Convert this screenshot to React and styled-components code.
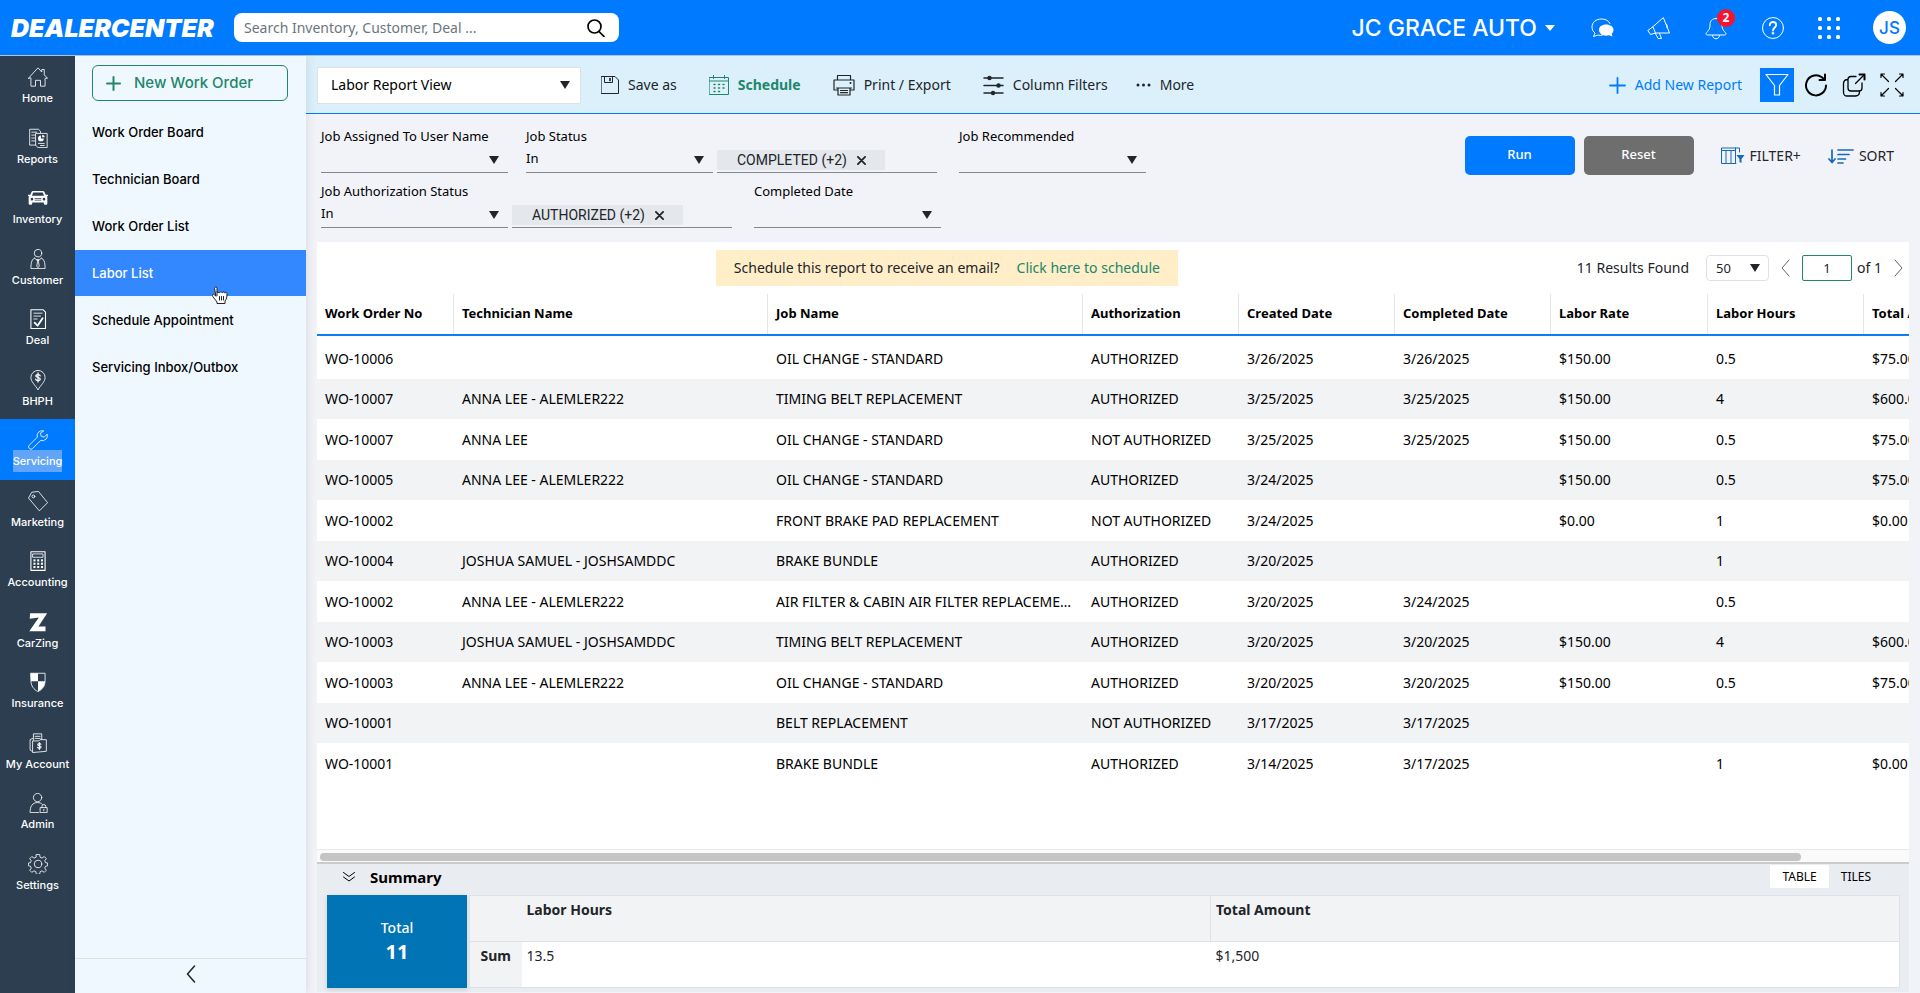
import React, { useState } from 'react';
import styled, { createGlobalStyle } from 'styled-components';

const GlobalStyle = createGlobalStyle`
	*, *::before, *::after {
		box-sizing: border-box;
	}

	body {
		margin: 0;
		background: #f2f3f8;
		color: #212529;
		font-family: 'Noto Sans', 'Open Sans', sans-serif;
		font-size: 14px;
		line-height: 20px;
	}

	button, input, select {
		font: inherit;
		color: inherit;
	}

	button {
		background: none;
		border: none;
		padding: 0;
		cursor: pointer;
	}

	a {
		color: inherit;
		text-decoration: none;
	}
`;

/* ---------- icons ---------- */

const Svg = styled.svg`
	display: block;
	flex: none;
	fill: none;
	stroke: currentColor;
	stroke-linecap: round;
	stroke-linejoin: round;
`;

function Icon({ size = 24, width, height, stroke = 1, box = '0 0 24 24', children }) {
	return (
		<Svg width={width || size} height={height || size} viewBox={box} strokeWidth={stroke} aria-hidden="true">
			{children}
		</Svg>
	);
}

const dot = { fill: 'currentColor', stroke: 'none' };

const navIcons = {
	Home: (
		<>
			<path d="M.500 13.500 12 1l4.500 5V3h3v6.500l4 4h-3V23h-5.500v-7h-6v7H3.500v-9.500z" />
		</>
	),
	Reports: (
		<>
			<path d="M9 20.500H2V1.500h10.500L15 4v2" />
			<path d="M4.500 5h6M4.500 8.500h4M4.500 12h4M4.500 15.500h4" />
			<path d="M9.500 6.500H23v17H12l-2.500-2.500z" />
			<path d="M12.500 18.500h7M15 21h4.500" />
			<path d="M15.500 9a3.500 3.500 0 1 0 3.500 3.500h-3.500z" {...dot} />
			<path d="M17 8a3.500 3.500 0 0 1 3.200 3.200H17z" {...dot} />
		</>
	),
	Inventory: (
		<path
			{...dot}
			fillRule="evenodd"
			d="M6 3.500h12c.8 0 1.500.5 1.800 1.200L21.200 8H24v2h-1.500c.5.600.7 1.200.7 2V19c0 .600-.4 1-1 1h-2.200c-.6 0-1-.4-1-1v-1.500H5V19c0 .600-.4 1-1 1H1.800c-.6 0-1-.4-1-1v-7c0-.8.2-1.400.7-2H0V8h2.800l1.400-3.300c.3-.7 1-1.200 1.800-1.200zM6.200 5.500 4.800 9.300h14.400l-1.400-3.800zM4.800 11.800a1.600 1.600 0 1 0 0 3.200 1.600 1.600 0 0 0 0-3.200zm14.400 0a1.600 1.600 0 1 0 0 3.200 1.600 1.600 0 0 0 0-3.200zM8 12.300v.9h8v-.9zm0 1.900v.9h8v-.9z"
		/>
	),
	Customer: (
		<>
			<circle cx="12" cy="5" r="4.500" />
			<path d="M8 11C5 12 3.500 15 3.500 23.500h17c0-8.500-1.500-11.500-4.500-12.500M8 11l4 3.500 4-3.500" />
			<path d="M11 12.500h2l-.5 2.500 1 5.500-1.500 2-1.500-2 1-5.500z" />
		</>
	),
	Deal: (
		<>
			<path d="M3.500.800h14.500l3 3v19.500H3.500z" strokeWidth="1.300" />
			<path d="M7 5h10M7 8.500h8M7 12h4" />
			<path d="m8 16.500 3.500 3.500 6-9" strokeWidth="2.200" />
		</>
	),
	BHPH: (
		<>
			<path d="M12 23.500C8 17.500 3.500 14 3.500 9a8.500 8.500 0 0 1 17 0c0 5-4.500 8.500-8.500 14.500z" />
			<path d="M14.700 7c-.3-1.100-1.300-1.600-2.700-1.600S9.400 6 9.400 7.200c0 2.400 5.300 1.200 5.300 3.700 0 1.200-1.100 1.800-2.700 1.800-1.500 0-2.500-.6-2.900-1.800M12 3.500v11" strokeWidth="1.500" />
		</>
	),
	Servicing: (
		<path d="M18.500 1a6 6 0 0 0-7.300 7.600L1.500 18.200a2.700 2.700 0 1 0 4 4L15.300 12.500A6 6 0 0 0 23 5l-3.500 3.500-3.600-.9-.9-3.400z" />
	),
	Marketing: (
		<>
			<path d="M.800 8 4.500 1.500l8-1L23.500 14 14 23.500z" />
			<circle cx="6.500" cy="6.500" r="1.700" />
		</>
	),
	Accounting: (
		<>
			<path d="M3.500.800h17v22.400h-17z" strokeWidth="1.300" />
			<path d="M6 3.500h12v4H6z" />
			{[10, 14, 18].map((y) =>
				[6.500, 11, 15.500].map((x) => <rect key={`${x}-${y}`} x={x} y={y} width="2.500" height="2.500" {...dot} />)
			)}
		</>
	),
	CarZing: <path d="M2.500 1.500h20.500L12.500 17.500H21V23H1.500L13 6.500 2 8z" {...dot} />,
	Insurance: (
		<>
			<path d="M3.500 1.500h17v9c0 6.500-3.500 10.500-8.500 13-5-2.500-8.500-6.500-8.500-13z" />
			<path d="M3.500 1.500H12V11H3.500zM12 11h8.500c-.3 6-4 10-8.500 12.500z" {...dot} />
		</>
	),
	'My Account': (
		<>
			<path d="M5 22 2.500 20.500V8l3-1.500M6.500 8.500V1h10v6.500M8.500 4h6M8.500 6.500h6" />
			<path d="M5.500 23V9.500H13L14.500 8H22v13.500z" />
			<path d="M15.500 13.600c-.3-.8-1-1-1.900-1s-1.900.5-1.900 1.400c0 1.800 4 1 4 2.900 0 1-.9 1.500-2.100 1.500-1 0-1.800-.4-2.100-1.300M13.600 11.500v8.200" strokeWidth="1.300" />
		</>
	),
	Admin: (
		<>
			<circle cx="11.500" cy="5.500" r="5" />
			<path d="M13 23.500H2.500c0-8 3-12 9-12 2.300 0 4.300.7 5.700 2" />
			<path d="M15 17.500h8v6h-8zM16.800 17.500V16a2.200 2.200 0 0 1 4.400 0v1.500M19 19.500v2" />
		</>
	),
	Settings: (
		<>
			<circle cx="12" cy="12" r="4.500" />
			<path d="M10 .700h4l.6 3.300 2.200.9 2.700-1.900 2.400 2.500-1.800 2.700.9 2.200 2.500.4v3.400l-2.500.5-.9 2.200 1.800 2.700-2.400 2.400-2.700-1.800-2.200.9-.6 3.200h-4l-.6-3.200-2.200-.9-2.700 1.800-2.400-2.400 1.800-2.700-.9-2.200-2.500-.5v-3.400l2.500-.4.9-2.200-1.800-2.700L4.500 3l2.700 1.900 2.200-.9z" />
		</>
	),
};

/* ---------- page ---------- */

const Page = styled.div`
	display: flex;
	flex-direction: column;
	min-height: 100vh;
`;

const Header = styled.header`
	display: flex;
	align-items: center;
	height: 56px;
	padding: 0 14px 0 11px;
	background: #007bff;
	border-bottom: 1px solid #b4c4d6;
	color: #fff;
`;

const Logo = styled.a`
	width: 223px;
	font-family: Inter, sans-serif;
	font-size: 25px;
	font-weight: 900;
	font-style: italic;
	white-space: nowrap;
`;

const SearchBox = styled.form`
	display: flex;
	align-items: center;
	width: 385px;
	height: 29px;
	padding: 0 14px 0 10px;
	border-radius: 8px;
	background: #fff;
	color: #000;
`;

const SearchInput = styled.input`
	flex: 1;
	min-width: 0;
	border: none;
	outline: none;
	background: transparent;
	padding: 0;

	&::placeholder {
		color: #6c757d;
		opacity: 1;
	}
`;

const HeaderTools = styled.div`
	display: flex;
	align-items: center;
	margin-left: auto;
`;

const Dealer = styled.button`
	display: flex;
	align-items: center;
	gap: 8px;
	margin-right: 35px;
	font-family: Inter, sans-serif;
	font-size: 23px;
	font-weight: 500;
	white-space: nowrap;
`;

const HeaderIcons = styled.div`
	display: flex;
	align-items: center;
	gap: 33px;
`;

const HeaderButton = styled.button`
	position: relative;
	display: block;
`;

const Badge = styled.span`
	position: absolute;
	top: -7px;
	right: -7px;
	width: 18px;
	height: 18px;
	border-radius: 50%;
	background: #f5132f;
	font-size: 12px;
	font-weight: 700;
	line-height: 18px;
	text-align: center;
`;

const Avatar = styled.button`
	width: 33px;
	height: 33px;
	border-radius: 50%;
	background: #fff;
	color: #007bff;
	font-family: Inter, sans-serif;
	font-size: 17px;
	font-weight: 500;
`;

const Body = styled.div`
	display: flex;
	flex: 1;
`;

const SideNav = styled.nav`
	flex: none;
	width: 75px;
	background: #2c3e50;
`;

const NavList = styled.div`
	display: grid;
	grid-auto-rows: 1fr;
	height: 847px;
`;

const NavItem = styled.a`
	display: flex;
	flex-direction: column;
	align-items: center;
	padding-top: 11px;
	background: ${(p) => (p.$active ? '#007bff' : 'transparent')};
	color: #fff;
	font-family: Inter, sans-serif;
	font-size: 11px;
	font-weight: 500;
	line-height: 22px;
	white-space: nowrap;
`;

const NavLabel = styled.span`
	background: ${(p) => (p.$selected ? '#62a5f8' : 'transparent')};
`;

const SubNav = styled.nav`
	position: relative;
	display: flex;
	flex-direction: column;
	flex: none;
	width: 231px;
	background: #f0f8ff;
	box-shadow: 2px 0 8px rgba(44, 62, 80, 0.1);
	font-family: Inter, sans-serif;
	font-weight: 500;
	font-size: 13px;
`;

const NewWorkOrder = styled.button`
	display: flex;
	align-items: center;
	gap: 13px;
	height: 36px;
	margin: 9px 18px 8px 17px;
	padding: 0 13px;
	border: 1px solid #20876b;
	border-radius: 6px;
	color: #20876b;
	font-size: 15px;
`;

const SubItem = styled.a`
	height: 46px;
	margin-bottom: 1px;
	padding-left: 17px;
	background: ${(p) => (p.$active ? '#3388ff' : 'transparent')};
	color: ${(p) => (p.$active ? '#fff' : '#000')};
	line-height: 46px;
`;

const Pointer = styled.div`
	position: absolute;
	top: 230px;
	left: 137px;
`;

const Collapse = styled.button`
	display: flex;
	justify-content: center;
	align-items: center;
	height: 35px;
	margin-top: auto;
	padding-bottom: 4px;
	border-top: 1px solid #dcdfe3;
`;

const Main = styled.main`
	display: flex;
	flex-direction: column;
	flex: 1;
	min-width: 0;
`;

const Toolbar = styled.div`
	display: flex;
	align-items: center;
	height: 58px;
	padding: 1px 16px 0 11px;
	background: #dcf0fb;
	border-bottom: 1px solid #007bff;
`;

const SelectWrap = styled.div`
	position: relative;
	display: block;
	width: ${(p) => p.$width}px;
`;

const Caret = styled.span`
	position: absolute;
	top: 50%;
	right: ${(p) => p.$right || 9}px;
	margin-top: -4px;
	border: 5px solid transparent;
	border-top: 8px solid #212529;
	border-bottom: 0;
	pointer-events: none;
`;

const DealerCaret = styled.span`
	border: 5px solid transparent;
	border-top: 6px solid #fff;
	border-bottom: 0;
`;

const ViewSelect = styled.select`
	display: block;
	width: 100%;
	height: 37px;
	padding: 0 13px;
	appearance: none;
	border: 1px solid #dee2e6;
	border-radius: 0;
	background: #fff;
	color: #000;
`;

const ToolButton = styled.button`
	display: flex;
	align-items: center;
	gap: 9px;
	margin-left: ${(p) => p.$space || 32}px;
	color: ${(p) => p.$color || '#212529'};
	font-weight: ${(p) => (p.$bold ? 700 : 400)};
	white-space: nowrap;
`;

const ToolRight = styled.div`
	display: flex;
	align-items: center;
	gap: 14px;
	margin-left: auto;
	color: #000;
`;

const FilterToggle = styled.button`
	display: flex;
	align-items: center;
	justify-content: center;
	width: 34px;
	height: 34px;
	margin-left: 4px;
	margin-right: -4px;
	background: #007bff;
	color: #fff;
`;

const FilterArea = styled.section`
	display: flex;
	justify-content: space-between;
	padding: 12px 26px 14px 15px;
	color: #000;
`;

const FilterRows = styled.div`
	display: flex;
	flex-direction: column;
	gap: 8px;
	font-size: 13px;
`;

const FilterRow = styled.div`
	display: flex;
	gap: 18px;
`;

const Field = styled.div`
	display: grid;
	grid-template-columns: 187px ${(p) => (p.$chip ? '220px' : '')};
	column-gap: 4px;
	padding-right: ${(p) => (p.$chip ? 4 : 0)}px;
`;

const FieldLabel = styled.label`
	grid-column: 1 / -1;
`;

const FieldSelect = styled.select`
	display: block;
	width: 100%;
	height: 27px;
	padding: 0 0 2px;
	appearance: none;
	border: none;
	border-bottom: 1px solid #85878a;
	border-radius: 0;
	background: transparent;
`;

const ChipField = styled.div`
	display: flex;
	align-items: flex-start;
	height: 27px;
	padding-top: 4px;
	border-bottom: 1px solid #85878a;
`;

const Chip = styled.span`
	display: flex;
	align-items: center;
	gap: 10px;
	height: 20px;
	padding: 0 19px 0 20px;
	background: #e4e7eb;
	color: #212529;
	font-family: Roboto, sans-serif;
	font-size: 14px;
`;

const Actions = styled.div`
	display: flex;
	align-items: center;
	gap: 9px;
	height: 39px;
	margin-top: 10px;
	color: #212529;
`;

const ActionButton = styled.button`
	width: 110px;
	height: 39px;
	padding-bottom: 3px;
	border-radius: 5px;
	background: ${(p) => (p.$primary ? '#007bff' : '#6e6e6e')};
	color: #fff;
	font-size: 13px;
	font-weight: 500;
`;

const LinkButton = styled.button`
	display: flex;
	align-items: center;
	gap: 5px;
	margin-left: 18px;
`;

const Report = styled.section`
	display: flex;
	flex-direction: column;
	flex: 1;
	margin: 0 11px 1px;
	background: #fff;
`;

const ReportTop = styled.div`
	display: flex;
	align-items: center;
	padding: 8px 6px 8px 0;
`;

const Notice = styled.p`
	margin: 0 auto;
	padding: 8px 18px;
	background: #ffeec8;
`;

const NoticeLink = styled.a`
	margin-left: 17px;
	color: #20876b;
`;

const Pager = styled.div`
	display: flex;
	align-items: center;
	color: #212529;
`;

const SizeSelect = styled.select`
	display: block;
	width: 100%;
	height: 26px;
	padding: 0 9px;
	appearance: none;
	border: 1px solid #dee2e6;
	border-radius: 4px;
	background: #fff;
	font-size: 13px;
`;

const PageInput = styled.input`
	width: 50px;
	height: 26px;
	margin-right: 5px;
	padding: 0;
	border: 1px solid #20876b;
	border-radius: 2px;
	text-align: center;
	font-size: 13px;
`;

const PageButton = styled.button`
	padding: 0 12px;

	&:last-child {
		padding-right: 0;
	}
`;

const Results = styled.span`
	margin-right: 17px;
`;

const TableWrap = styled.div`
	flex: 1;
	overflow: hidden;
`;

const Table = styled.table`
	width: 1741px;
	table-layout: fixed;
	border-collapse: separate;
	border-spacing: 0;
	color: #000;
`;

const Th = styled.th`
	height: 40px;
	padding: 0 7px 2px 8px;
	border-right: 1px solid #e4e6e9;
	text-align: left;
	font-size: 13px;
	font-weight: 700;
	white-space: nowrap;
`;

const HeadRule = styled.td`
	height: 4px;
	padding: 0;
	border-top: 2px solid #0a7ff5;
`;

const Tr = styled.tr`
	height: 40px;

	&:nth-child(odd) {
		height: 41px;
	}

	&:nth-child(even) {
		background: #f2f3f5;
	}
`;

const Td = styled.td`
	padding: 0 8px;
	overflow: hidden;
	text-overflow: ellipsis;
	white-space: nowrap;
`;

const ScrollTrack = styled.div`
	height: 15px;
	padding: 3px;
	border-top: 1px solid #e8e8e8;
	border-bottom: 2px solid #c9cbce;
	background: #fafafa;
`;

const ScrollThumb = styled.div`
	width: 93.4%;
	height: 8px;
	border-radius: 4px;
	background: #c4c4c4;
`;

const Summary = styled.section`
	padding: 2px 9px 4px 10px;
	background: #e9ecf0;
`;

const SummaryHead = styled.div`
	display: flex;
	align-items: center;
	height: 29px;
	padding: 0 17px 8px 16px;
	color: #000;
`;

const SummaryTitle = styled.h2`
	margin: 0 auto 0 15px;
	font-size: 15px;
	line-height: 20px;
`;

const Tab = styled.button`
	height: 23px;
	padding: 0 12px;
	background: ${(p) => (p.$active ? '#fff' : 'transparent')};
	font-size: 12px;
`;

const SummaryBody = styled.div`
	display: flex;
	gap: 2px;
`;

const TotalTile = styled.div`
	display: flex;
	flex-direction: column;
	align-items: center;
	justify-content: center;
	flex: none;
	width: 140px;
	background: #0074b5;
	color: #fff;
	font-weight: 500;
	box-shadow: 0 2px 5px rgba(0, 0, 0, 0.12);
`;

const TotalValue = styled.strong`
	font-size: 20px;
	line-height: 28px;
`;

const SumTable = styled.table`
	width: 100%;
	table-layout: fixed;
	border-collapse: collapse;
	border: 1px solid #dee2e6;
	background: #fff;
`;

const SumCell = styled.td`
	height: 46px;
	padding: 4px 5px;
	border-bottom: 1px solid #dee2e6;
	vertical-align: top;
`;

const SumHead = styled.th`
	height: 46px;
	padding: 4px 5px;
	border-bottom: 1px solid #dee2e6;
	border-right: ${(p) => (p.$divider ? '1px solid #dee2e6' : 'none')};
	background: #f2f3f5;
	text-align: ${(p) => (p.scope === 'row' ? 'center' : 'left')};
	vertical-align: top;
`;

const subItems = [
	'Work Order Board',
	'Technician Board',
	'Work Order List',
	'Labor List',
	'Schedule Appointment',
	'Servicing Inbox/Outbox',
];

const columns = [
	['Work Order No', 137],
	['Technician Name', 314],
	['Job Name', 315],
	['Authorization', 156],
	['Created Date', 156],
	['Completed Date', 156],
	['Labor Rate', 157],
	['Labor Hours', 156],
	['Total Amount', 194],
];

const rows = [
	['WO-10006', '', 'OIL CHANGE - STANDARD', 'AUTHORIZED', '3/26/2025', '3/26/2025', '$150.00', '0.5', '$75.00'],
	['WO-10007', 'ANNA LEE - ALEMLER222', 'TIMING BELT REPLACEMENT', 'AUTHORIZED', '3/25/2025', '3/25/2025', '$150.00', '4', '$600.00'],
	['WO-10007', 'ANNA LEE', 'OIL CHANGE - STANDARD', 'NOT AUTHORIZED', '3/25/2025', '3/25/2025', '$150.00', '0.5', '$75.00'],
	['WO-10005', 'ANNA LEE - ALEMLER222', 'OIL CHANGE - STANDARD', 'AUTHORIZED', '3/24/2025', '', '$150.00', '0.5', '$75.00'],
	['WO-10002', '', 'FRONT BRAKE PAD REPLACEMENT', 'NOT AUTHORIZED', '3/24/2025', '', '$0.00', '1', '$0.00'],
	['WO-10004', 'JOSHUA SAMUEL - JOSHSAMDDC', 'BRAKE BUNDLE', 'AUTHORIZED', '3/20/2025', '', '', '1', ''],
	['WO-10002', 'ANNA LEE - ALEMLER222', 'AIR FILTER & CABIN AIR FILTER REPLACEMENT', 'AUTHORIZED', '3/20/2025', '3/24/2025', '', '0.5', ''],
	['WO-10003', 'JOSHUA SAMUEL - JOSHSAMDDC', 'TIMING BELT REPLACEMENT', 'AUTHORIZED', '3/20/2025', '3/20/2025', '$150.00', '4', '$600.00'],
	['WO-10003', 'ANNA LEE - ALEMLER222', 'OIL CHANGE - STANDARD', 'AUTHORIZED', '3/20/2025', '3/20/2025', '$150.00', '0.5', '$75.00'],
	['WO-10001', '', 'BELT REPLACEMENT', 'NOT AUTHORIZED', '3/17/2025', '3/17/2025', '', '', ''],
	['WO-10001', '', 'BRAKE BUNDLE', 'AUTHORIZED', '3/14/2025', '3/17/2025', '', '1', '$0.00'],
];

function FilterField({ id, label, value = '', chip }) {
	return (
		<Field $chip={chip}>
			<FieldLabel htmlFor={id}>{label}</FieldLabel>
			<SelectWrap $width={187}>
				<FieldSelect id={id} defaultValue={value}>
					<option value={value}>{value}</option>
				</FieldSelect>
				<Caret />
			</SelectWrap>
			{chip && (
				<ChipField>
					<Chip>
						{chip}
						<button aria-label={`Remove ${chip}`}>
							<Icon size={9} stroke={2} box="0 0 10 10"><path d="m1 1 8 8M9 1 1 9" /></Icon>
						</button>
					</Chip>
				</ChipField>
			)}
		</Field>
	);
}

function TopBar() {
	return (
		<Header>
			<Logo href="#">DEALERCENTER</Logo>
			<SearchBox>
				<SearchInput aria-label="Search" placeholder="Search Inventory, Customer, Deal ..." />
				<button type="button" aria-label="Run search">
					<Icon size={18} stroke={1.700} box="0 0 18 18">
						<circle cx="7.500" cy="7.500" r="6.500" />
						<path d="m12 12.500 5 5" />
					</Icon>
				</button>
			</SearchBox>
			<HeaderTools>
				<Dealer>
					JC GRACE AUTO
					<DealerCaret />
				</Dealer>
				<HeaderIcons>
					<HeaderButton aria-label="Messages">
						<Icon>
							<path d="M20 7.500C18.500 4.500 15.500 3 11.500 3 6 3 2 6.300 2 11c0 2.500 1.200 4.700 3 6.100L3.500 20.500 8 19c1.500.5 3 .6 4 .4" />
							<path d="M16 8.500c4.500 0 7.500 2.300 7.500 5.300 0 1.600-.7 3-1.800 3.900l.8 2.800-3.400-1.200c-1 .3-2 .4-3.100.4-4.200 0-7-2.600-7-5.900 0-3 2.800-5.300 7-5.300z" {...dot} />
						</Icon>
					</HeaderButton>
					<HeaderButton aria-label="Announcements">
						<Icon>
							<path d="M16.500 2 22.500 17 8.500 17 3.500 18.500.800 14.500 5 11.500zM6 11l2.500 6M8.500 17.500 11 22.500h3.500L12.500 17.500M18.500 7.500c1.500.5 2 2 1.500 4" />
						</Icon>
					</HeaderButton>
					<HeaderButton aria-label="Notifications">
						<Icon>
							<path d="M12 2.500c-4 0-6 2.500-6 6.500 0 5-2 5.500-4 8.500 0 1 .5 1.500 1.500 1.500h17c1 0 1.500-.5 1.500-1.500C20 14.500 18 14 18 9c0-4-2-6.500-6-6.500zM8.500 19.500c.3 4.500 6.700 4.500 7 0" />
						</Icon>
						<Badge>2</Badge>
					</HeaderButton>
					<HeaderButton aria-label="Help">
						<Icon>
							<circle cx="12" cy="12" r="10.500" />
							<path d="M8.800 9.300c0-2 1.300-3.300 3.200-3.300s3.200 1.200 3.200 3c0 2.500-3.200 2.500-3.200 5.500" strokeWidth="1.800" />
							<circle cx="12" cy="17.300" r="1.300" {...dot} />
						</Icon>
					</HeaderButton>
					<HeaderButton aria-label="Apps">
						<Icon size={22} box="0 0 22 22">
							{[0, 9, 18].map((y) =>
								[0, 9, 18].map((x) => <rect key={`${x}-${y}`} x={x} y={y} width="4" height="4" rx="1.500" {...dot} />)
							)}
						</Icon>
					</HeaderButton>
					<Avatar>JS</Avatar>
				</HeaderIcons>
			</HeaderTools>
		</Header>
	);
}

function ReportToolbar() {
	return (
		<Toolbar>
			<SelectWrap $width={264}>
				<ViewSelect aria-label="Report view">
					<option>Labor Report View</option>
				</ViewSelect>
				<Caret $right={11} />
			</SelectWrap>
			<ToolButton $space={20}>
				<Icon size={18} box="0 0 18 18">
					<path d="M.5.500h13.500l3.500 3.500v13.500H.500zM3.500.500v6h8v-6" />
					<path d="M9 2.500v2" strokeWidth="1.700" />
				</Icon>
				Save as
			</ToolButton>
			<ToolButton $color="#20876b" $bold>
				<Icon size={20} box="0 0 20 20">
					<path d="M.5 2.500h19v17H.500zM.5 6h19M4.500.500v3M15.500.500v3" />
					<path d="M5 9.500h1M9.500 9.500h1M14 9.500h1M5 13h1M9.500 13h1M14 13h1M5 16.500h1M9.500 16.500h1" strokeWidth="1.500" />
				</Icon>
				Schedule
			</ToolButton>
			<ToolButton>
				<Icon size={22} box="0 0 22 22">
					<path d="M4.500 6V1.500h13V6M4.500 16H1V6h20v10h-3.500M5 14v7h12v-7M3.500 14h15M7.500 16.500h7M7.500 18.700h7" strokeWidth="1.200" />
					<circle cx="17.500" cy="9" r="1" {...dot} />
				</Icon>
				Print / Export
			</ToolButton>
			<ToolButton>
				<Icon size={21} stroke={1.500} box="0 0 21 21">
					<path d="M1 3h19M1 10.500h19M1 18h19" />
					<circle cx="6.500" cy="3" r="2.200" {...dot} />
					<circle cx="15.500" cy="10.500" r="2.200" {...dot} />
					<circle cx="10" cy="18" r="2.200" {...dot} />
				</Icon>
				Column Filters
			</ToolButton>
			<ToolButton $space={28}>
				<Icon width={15} height={4} box="0 0 15 4">
					<circle cx="2" cy="2" r="1.500" {...dot} />
					<circle cx="7.500" cy="2" r="1.500" {...dot} />
					<circle cx="13" cy="2" r="1.500" {...dot} />
				</Icon>
				More
			</ToolButton>
			<ToolRight>
				<ToolButton $color="#007bff">
					<Icon size={17} stroke={1.800} box="0 0 17 17"><path d="M8.500 1v15M1 8.500h15" /></Icon>
					Add New Report
				</ToolButton>
				<FilterToggle aria-label="Toggle filters">
					<Icon stroke={1.200}><path d="M1 1.500h22l-8.500 11V22h-5v-9.500z" /></Icon>
				</FilterToggle>
				<HeaderButton aria-label="Refresh">
					<Icon stroke={2}><path d="M22 12.500A10 10 0 1 1 17.500 4l2.500 2M21 1.500v5.500h-5.500" /></Icon>
				</HeaderButton>
				<HeaderButton aria-label="Open in new window">
					<Icon stroke={1.300}>
						<path d="M14 3.500H9a3 3 0 0 0-3 3v8.500a3 3 0 0 0 3 3h8a3 3 0 0 0 3-3v-5M6 6.500C3 6.500 1.500 8 1.500 10.500v9A3.500 3.500 0 0 0 5 23h8.500c2.500 0 4-1.500 4-4.500M13.500 10.500l9-9" />
						<path d="M17.500 1.500H22.500V6.500" strokeWidth="2" />
					</Icon>
				</HeaderButton>
				<HeaderButton aria-label="Full screen">
					<Icon stroke={1.200}>
						<path d="m1.500 1.500 7 7M1 4.500V1h3.500M22.500 1.500l-7 7M19.500 1H23v3.500M1.500 22.500l7-7M1 19.500V23h3.500M22.500 22.500l-7-7M19.500 23H23v-3.500" />
					</Icon>
				</HeaderButton>
			</ToolRight>
		</Toolbar>
	);
}

function Filters() {
	return (
		<FilterArea>
			<FilterRows>
				<FilterRow>
					<FilterField id="assigned" label="Job Assigned To User Name" />
					<FilterField id="status" label="Job Status" value="In" chip="COMPLETED (+2)" />
					<FilterField id="recommended" label="Job Recommended" />
				</FilterRow>
				<FilterRow>
					<FilterField id="authorization" label="Job Authorization Status" value="In" chip="AUTHORIZED (+2)" />
					<FilterField id="completed" label="Completed Date" />
				</FilterRow>
			</FilterRows>
			<Actions>
				<ActionButton $primary>Run</ActionButton>
				<ActionButton>Reset</ActionButton>
				<LinkButton>
					<Icon width={24} height={18} box="0 0 24 18">
						<g stroke="#1669b7">
							<path d="M15 16.500H.500V1h18v4M.5 3.500h14M5 3.500v13M10 3.500v13M14.500 1v15.500" />
							<path d="M15.500 8h8l-3 4v4l-2-1v-3z" fill="#1669b7" stroke="none" />
						</g>
					</Icon>
					FILTER+
				</LinkButton>
				<LinkButton>
					<Icon width={26} height={16} stroke={1.700} box="0 0 26 16">
						<path stroke="#1669b7" d="M4 2v12M1 11l3 3.500L7 11M10 2h15M10 6.500h11M10 11h7.500M10 15h5" />
					</Icon>
					SORT
				</LinkButton>
			</Actions>
		</FilterArea>
	);
}

function SummaryPanel() {
	const [tab, setTab] = useState('TABLE');
	return (
		<Summary>
			<SummaryHead>
				<button aria-label="Collapse summary">
					<Icon size={12} box="0 0 12 12"><path d="m.5 1.500 5.500 4 5.500-4M.5 6 6 10l5.500-4" /></Icon>
				</button>
				<SummaryTitle>Summary</SummaryTitle>
				{['TABLE', 'TILES'].map((name) => (
					<Tab key={name} $active={tab === name} onClick={() => setTab(name)}>{name}</Tab>
				))}
			</SummaryHead>
			<SummaryBody>
				<TotalTile>
					Total
					<TotalValue>11</TotalValue>
				</TotalTile>
				<SumTable>
					<colgroup>
						<col width="52" />
						<col />
						<col />
					</colgroup>
					<thead>
						<tr>
							<SumHead />
							<SumHead scope="col" $divider>Labor Hours</SumHead>
							<SumHead scope="col">Total Amount</SumHead>
						</tr>
					</thead>
					<tbody>
						<tr>
							<SumHead scope="row">Sum</SumHead>
							<SumCell>13.5</SumCell>
							<SumCell>$1,500</SumCell>
						</tr>
					</tbody>
				</SumTable>
			</SummaryBody>
		</Summary>
	);
}

function App() {
	return (
		<>
			<GlobalStyle />
			<Page>
				<TopBar />
				<Body>
					<SideNav>
						<NavList>
							{Object.keys(navIcons).map((name) => (
								<NavItem key={name} href="#" $active={name === 'Servicing'}>
									<Icon size={20}>{navIcons[name]}</Icon>
									<NavLabel $selected={name === 'Servicing'}>{name}</NavLabel>
								</NavItem>
							))}
						</NavList>
					</SideNav>
					<SubNav>
						<NewWorkOrder>
							<Icon size={15} stroke={2} box="0 0 15 15"><path d="M7.500 1v13M1 7.500h13" /></Icon>
							New Work Order
						</NewWorkOrder>
						{subItems.map((name) => (
							<SubItem key={name} href="#" $active={name === 'Labor List'}>{name}</SubItem>
						))}
						<Pointer>
							<Icon width={16} height={18} box="0 0 16 18">
								<path
									d="M5 9.500V2.300C5 .500 2.500.500 2.500 2.300l1.500 8-1.500-1.500C1 7.500-.3 9 .8 10.500L5 16v1.500h8V15c1.500-2 2-3.500 2-7.500 0-1.500-2-1.500-2-.3C13 5.500 10.500 5.500 10.500 7c0-1.500-2.700-1.500-2.700-.3L5 6"
									fill="#fff"
									stroke="#222"
								/>
								<path d="M7.500 10.500V14M9.500 10.500V14M11.500 10.500V14" stroke="#222" />
							</Icon>
						</Pointer>
						<Collapse aria-label="Collapse menu">
							<Icon width={10} height={18} stroke={1.500} box="0 0 10 18"><path d="M8.500 1 1.500 9l7 8" /></Icon>
						</Collapse>
					</SubNav>
					<Main>
						<ReportToolbar />
						<Filters />
						<Report>
							<ReportTop>
								<Notice>
									Schedule this report to receive an email?
									<NoticeLink href="#">Click here to schedule</NoticeLink>
								</Notice>
								<Pager>
									<Results>11 Results Found</Results>
									<SelectWrap $width={63}>
										<SizeSelect aria-label="Rows per page">
											<option>50</option>
										</SizeSelect>
										<Caret />
									</SelectWrap>
									<PageButton aria-label="Previous page">
										<Icon width={9} height={18} box="0 0 9 18"><path d="M8 1 1 9l7 8" stroke="#666" /></Icon>
									</PageButton>
									<PageInput aria-label="Page" defaultValue="1" />
									of 1
									<PageButton aria-label="Next page">
										<Icon width={9} height={18} box="0 0 9 18"><path d="m1 1 7 8-7 8" stroke="#666" /></Icon>
									</PageButton>
								</Pager>
							</ReportTop>
							<TableWrap>
								<Table>
									<colgroup>
										{columns.map(([name, width]) => <col key={name} width={width} />)}
									</colgroup>
									<thead>
										<tr>
											{columns.map(([name]) => <Th key={name} scope="col">{name}</Th>)}
										</tr>
										<tr>
											<HeadRule colSpan={columns.length} />
										</tr>
									</thead>
									<tbody>
										{rows.map((row, i) => (
											<Tr key={i}>
												{row.map((cell, j) => <Td key={j}>{cell}</Td>)}
											</Tr>
										))}
									</tbody>
								</Table>
							</TableWrap>
							<ScrollTrack>
								<ScrollThumb />
							</ScrollTrack>
							<SummaryPanel />
						</Report>
					</Main>
				</Body>
			</Page>
		</>
	);
}

export default App;
